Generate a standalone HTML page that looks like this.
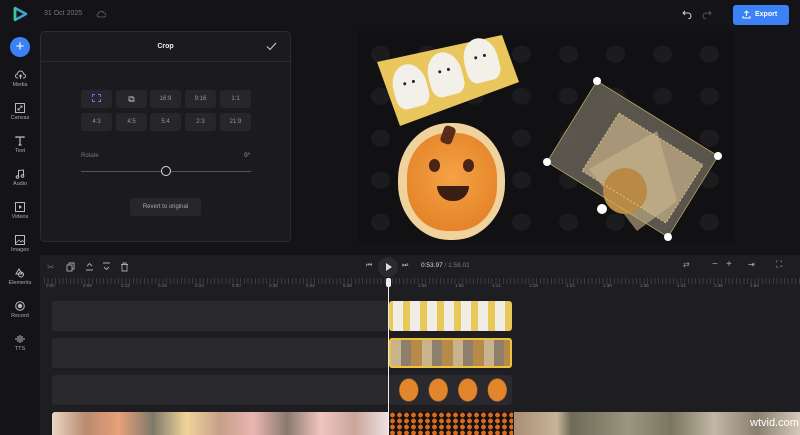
<!DOCTYPE html>
<html><head><style>
*{margin:0;padding:0;box-sizing:border-box}
body{width:800px;height:435px;background:#141418;font-family:"Liberation Sans",sans-serif;color:#ccc;position:relative;overflow:hidden}
.a{position:absolute}
.side{left:0;top:0;width:40px;height:435px;background:#141418}
.si{position:absolute;left:0;width:40px;text-align:center;font-size:5.5px;color:#aaa}
.si svg{display:block;margin:0 auto 2px}
.panel{left:40px;top:31px;width:251px;height:211px;background:#1b1b1f;border:1px solid #2b2b30;border-radius:5px}
.btn{position:absolute;width:31px;height:18px;background:#26262b;border-radius:3px;font-size:6px;color:#999;text-align:center;line-height:18px}
.tl{left:40px;top:255px;width:760px;height:180px;background:#1e1e22}
.track{position:absolute;left:52px;width:336px;height:30px;background:#29292e;border-radius:3px}
.tick{position:absolute;top:283px;font-size:4.5px;color:#777}
.gh{position:absolute;width:34px;height:44px;background:#f3f0ea;border-radius:50% 50% 28% 28%;transform:rotate(-15deg)}
.gh:before,.gh:after{content:"";position:absolute;top:17px;width:3px;height:3px;background:#222;border-radius:50%}
.gh:before{left:11px}.gh:after{left:20px}
</style></head><body>
<div class="a side"></div>
<svg class="a" style="left:12px;top:6px" width="16" height="16" viewBox="0 0 16 16"><path d="M3 2 L14 8 L3 14 Z" fill="none" stroke="#3aa6c9" stroke-width="2.6" stroke-linejoin="round"/><path d="M3 2 L3 14" stroke="#41c29a" stroke-width="2.6"/></svg>
<div class="a" style="left:44px;top:10px;font-size:7px;color:#777">31 Oct 2025</div>
<svg class="a" style="left:96px;top:10px" width="10" height="8" viewBox="0 0 10 8"><path d="M2.5 7 H8 A2 2 0 0 0 8 3 A3 3 0 0 0 2.5 3.5 A1.8 1.8 0 0 0 2.5 7Z" fill="none" stroke="#666" stroke-width=".8"/></svg>
<div class="a" style="left:10px;top:37px;width:20px;height:20px;border-radius:50%;background:#3b82f6;color:#fff;text-align:center;line-height:19px;font-size:15px">+</div>
<div class="si" style="top:70px"><svg width="11" height="10" viewBox="0 0 11 10"><path d="M3 8H2.5A2 2 0 0 1 2.5 4A3 3 0 0 1 8.5 4A2 2 0 0 1 8.5 8H8M5.5 9V5M4 6.5L5.5 5L7 6.5" fill="none" stroke="#bbb"/></svg>Media</div>
<div class="si" style="top:103px"><svg width="10" height="10" viewBox="0 0 10 10"><rect x=".5" y=".5" width="9" height="9" fill="none" stroke="#bbb"/><path d="M3 7L7 3M5 3H7V5M3 5V7H5" fill="none" stroke="#bbb" stroke-width=".8"/></svg>Canvas</div>
<div class="si" style="top:136px"><svg width="10" height="10" viewBox="0 0 10 10"><path d="M1 2V1H9V2M5 1V9M3.5 9H6.5" fill="none" stroke="#bbb" stroke-width="1.2"/></svg>Text</div>
<div class="si" style="top:169px"><svg width="10" height="10" viewBox="0 0 10 10"><path d="M3.5 8V1.5L8.5 1V7" fill="none" stroke="#bbb"/><circle cx="2.5" cy="8" r="1.3" fill="none" stroke="#bbb"/><circle cx="7.5" cy="7" r="1.3" fill="none" stroke="#bbb"/></svg>Audio</div>
<div class="si" style="top:202px"><svg width="10" height="10" viewBox="0 0 10 10"><rect x=".5" y=".5" width="9" height="9" fill="none" stroke="#bbb"/><path d="M4 3V7L7 5Z" fill="#bbb"/></svg>Videos</div>
<div class="si" style="top:235px"><svg width="10" height="10" viewBox="0 0 10 10"><rect x=".5" y=".5" width="9" height="9" fill="none" stroke="#bbb"/><path d="M1 8L4 5L6 7L7.5 5.5L9 7" fill="none" stroke="#bbb" stroke-width=".8"/></svg>Images</div>
<div class="si" style="top:268px"><svg width="10" height="10" viewBox="0 0 10 10"><circle cx="6" cy="6.5" r="2.5" fill="none" stroke="#bbb"/><path d="M4 1L1 6H7Z" fill="none" stroke="#bbb"/></svg>Elements</div>
<div class="si" style="top:301px"><svg width="10" height="10" viewBox="0 0 10 10"><circle cx="5" cy="5" r="4.3" fill="none" stroke="#bbb"/><circle cx="5" cy="5" r="2.2" fill="#bbb"/></svg>Record</div>
<div class="si" style="top:334px"><svg width="10" height="10" viewBox="0 0 10 10"><path d="M1 4V6M3 2V8M5 1V9M7 2V8M9 4V6" stroke="#bbb"/></svg>TTS</div>

<div class="a panel">
 <div style="height:30px;border-bottom:1px solid #2b2b30;text-align:center;line-height:30px;font-size:7px;font-weight:bold;color:#eee">Crop</div>
 <svg style="position:absolute;right:13px;top:10px" width="11" height="9" viewBox="0 0 11 9"><path d="M1 4.5L4 7.5L10 1" fill="none" stroke="#ccc" stroke-width="1.1"/></svg>
 <div class="btn" style="left:40px;top:58px"><span style="display:inline-block;width:9px;height:8px;border:1px dashed #5a7de0;vertical-align:middle"></span></div>
 <div class="btn" style="left:75px;top:58px;color:#ccc;font-size:9px">⧉</div>
 <div class="btn" style="left:109px;top:58px">16:9</div>
 <div class="btn" style="left:144px;top:58px">9:16</div>
 <div class="btn" style="left:179px;top:58px">1:1</div>
 <div class="btn" style="left:40px;top:81px">4:3</div>
 <div class="btn" style="left:75px;top:81px">4:5</div>
 <div class="btn" style="left:109px;top:81px">5:4</div>
 <div class="btn" style="left:144px;top:81px">2:3</div>
 <div class="btn" style="left:179px;top:81px">21:9</div>
 <div style="position:absolute;left:40px;top:121px;font-size:6px;color:#777">Rotate</div>
 <div style="position:absolute;right:40px;top:121px;font-size:6px;color:#aaa">0°</div>
 <div style="position:absolute;left:40px;top:139px;width:170px;height:1px;background:#555"></div>
 <div style="position:absolute;left:120px;top:134px;width:10px;height:10px;border-radius:50%;border:1px solid #ddd;background:#1b1b1f"></div>
 <div style="position:absolute;left:89px;top:166px;width:71px;height:18px;background:#26262b;border-radius:3px;font-size:6px;color:#aaa;text-align:center;line-height:18px">Revert to original</div>
</div>

<svg class="a" style="left:682px;top:9px" width="10" height="10" viewBox="0 0 10 10"><path d="M3 2L1 4L3 6M1 4H6A3 3 0 0 1 6 10" fill="none" stroke="#ccc"/></svg>
<svg class="a" style="left:702px;top:9px" width="10" height="10" viewBox="0 0 10 10"><path d="M7 2L9 4L7 6M9 4H4A3 3 0 0 0 4 10" fill="none" stroke="#555"/></svg>
<div class="a" style="left:733px;top:5px;width:56px;height:20px;background:#3b82f6;border-radius:3px;color:#fff;font-size:7px;font-weight:bold;line-height:20px;padding-left:22px">Export</div>
<svg class="a" style="left:742px;top:10px" width="9" height="9" viewBox="0 0 9 9"><path d="M4.5 6V1M2.5 3L4.5 1L6.5 3M1 6V8H8V6" fill="none" stroke="#fff"/></svg>

<!-- canvas -->
<div class="a" style="left:357px;top:31px;width:377px;height:212px;background:#111113;overflow:hidden">
 <div style="position:absolute;inset:0;background:radial-gradient(ellipse 10px 9px at 50% 55%,#1c1c1e 90%,transparent 100%) 0 0/47px 42px"></div>
 <svg style="position:absolute;left:0;top:0" width="377" height="212"><path d="M20 31L145 4L162 51L43 95Z" fill="#e9c75c"/></svg>
 <div class="gh" style="left:36px;top:33px"></div><div class="gh" style="left:71px;top:21px"></div><div class="gh" style="left:107px;top:7px"></div>
 <div style="position:absolute;left:41px;top:92px;width:107px;height:117px;background:#f0d29c;border-radius:48%"></div>
 <div style="position:absolute;left:50px;top:102px;width:90px;height:98px;background:radial-gradient(circle at 50% 45%,#f5a245,#e07a20);border-radius:45%"></div>
 <div style="position:absolute;left:85px;top:95px;width:12px;height:18px;background:#5a2a1a;border-radius:4px;transform:rotate(20deg)"></div>
 <div style="position:absolute;left:80px;top:155px;width:32px;height:15px;background:#3a1e14;border-radius:0 0 16px 16px"></div>
 <div style="position:absolute;left:72px;top:128px;width:11px;height:13px;background:#4a2418;border-radius:50%"></div>
 <div style="position:absolute;left:106px;top:128px;width:11px;height:13px;background:#4a2418;border-radius:50%"></div>
 <svg style="position:absolute;left:0;top:0" width="377" height="212">
  <path d="M240 50L361 125L311 206L190 131Z" fill="#6c665c" opacity=".8"/>
  <path d="M262 82L346 134L309 192L225 140Z" fill="#a89678"/>
  <path d="M232 138L300 100L320 170L280 200Z" fill="#c8b48e" opacity=".6"/>
  <ellipse cx="268" cy="160" rx="22" ry="23" fill="#b98a45"/>
  <path d="M240 50L361 125L311 206L190 131Z" fill="none" stroke="#c9b660" stroke-width=".7"/>
  <path d="M262 82L346 134L309 192L225 140Z" fill="none" stroke="#e5d080" stroke-width=".8" stroke-dasharray="2 2"/>
  <g fill="#fff"><circle cx="240" cy="50" r="4"/><circle cx="361" cy="125" r="4"/><circle cx="311" cy="206" r="4"/><circle cx="190" cy="131" r="4"/><circle cx="245" cy="178" r="5"/></g></svg>
</div>

<!-- timeline -->
<div class="a tl"></div>
<div class="a" style="left:47px;top:262px;font-size:9px;color:#666">✂</div>
<svg class="a" style="left:66px;top:262px" width="64" height="10" viewBox="0 0 64 10"><g fill="none" stroke="#aaa" stroke-width=".9"><rect x="1" y="3" width="5" height="6"/><path d="M3 3V1H8V7H6"/><path d="M20 8H27M21 4L23.5 1.5L26 4"/><path d="M37 1H44M38 5L40.5 7.5L43 5"/><path d="M55 2.5H62M56 2.5V9H61V2.5M57 2.5V1H60V2.5"/></g></svg>
<div class="a" style="left:366px;top:262px;font-size:7px;color:#aaa">⏮</div>
<div class="a" style="left:378px;top:257px;width:20px;height:20px;border-radius:50%;background:#2a2a2f"></div>
<svg class="a" style="left:385px;top:263px" width="8" height="8"><path d="M1 0L7 4L1 8Z" fill="#ddd"/></svg>
<div class="a" style="left:402px;top:262px;font-size:7px;color:#aaa">⏭</div>
<div class="a" style="left:421px;top:262px;font-size:6.5px;color:#ddd">0:53.97 <span style="color:#777">/ 1:58.01</span></div>
<div class="a" style="left:683px;top:260px;font-size:8px;color:#999">⇄</div>
<div class="a" style="left:712px;top:259px;font-size:10px;color:#aaa">−&nbsp;&nbsp;&nbsp;+</div>
<div class="a" style="left:748px;top:260px;font-size:8px;color:#aaa">⇥</div>
<div class="a" style="left:776px;top:259px;font-size:9px;color:#aaa">⛶</div>
<div class="a" style="left:44px;top:278px;width:756px;height:6px;background:repeating-linear-gradient(90deg,#3a3a40 0 1px,transparent 1px 3.7px)"></div>
<div class="tick" style="left:46px">0:00</div><div class="tick" style="left:83px">0:06</div><div class="tick" style="left:121px">0:12</div><div class="tick" style="left:158px">0:18</div><div class="tick" style="left:195px">0:24</div><div class="tick" style="left:232px">0:30</div><div class="tick" style="left:269px">0:36</div><div class="tick" style="left:306px">0:42</div><div class="tick" style="left:343px">0:48</div><div class="tick" style="left:418px">1:00</div><div class="tick" style="left:455px">1:06</div><div class="tick" style="left:492px">1:12</div><div class="tick" style="left:529px">1:18</div><div class="tick" style="left:566px">1:24</div><div class="tick" style="left:603px">1:30</div><div class="tick" style="left:640px">1:36</div><div class="tick" style="left:677px">1:42</div><div class="tick" style="left:714px">1:48</div><div class="tick" style="left:750px">1:54</div>
<div class="track" style="top:301px"></div>
<div class="track" style="top:338px"></div>
<div class="track" style="top:375px"></div>
<div class="a" style="left:52px;top:412px;width:336px;height:23px;background:linear-gradient(90deg,#e9d7c4,#b98b70,#e7a07a,#7d7a6a,#f1d39a,#c6a08a,#eab5b0,#887a6e,#f2c6c0,#c9a59a,#ede0e0);border-radius:3px 0 0 0"></div>
<div class="a" style="left:389px;top:301px;width:123px;height:30px;background:repeating-linear-gradient(90deg,#e7c859 0 4px,#f0ede4 4px 14px,#e7c859 14px 17px);border-radius:3px"></div>
<div class="a" style="left:389px;top:338px;width:123px;height:30px;border:2px solid #f0c43a;background:repeating-linear-gradient(90deg,#c9b38c 0 10px,#8d7f6a 10px 20px,#b68b4a 20px 31px);border-radius:3px"></div>
<div class="a" style="left:389px;top:375px;width:123px;height:30px;background:#29292e;border-radius:3px"></div>
<div class="a" style="left:394px;top:377px;width:118px;height:26px;background:radial-gradient(ellipse 10px 12px at 50% 50%,#e3852b 90%,transparent 100%) 0 0/29.5px 26px"></div>
<div class="a" style="left:389px;top:412px;width:124px;height:23px;background:radial-gradient(circle 2.5px at 50% 50%,#d56a20 90%,#1a1210 100%) 0 0/7px 6px"></div>
<div class="a" style="left:514px;top:412px;width:286px;height:23px;background:linear-gradient(90deg,#a88e72,#c9b49a 15%,#6d6a55 20%,#9a9680 40%,#7a7660 55%,#c2b7a4 70%,#8a8070 85%,#d6c9bb)"></div>
<div class="a" style="left:750px;top:417px;font-size:11px;color:#fff">wtvid.com</div>
<div class="a" style="left:388px;top:282px;width:1px;height:153px;background:#eee"></div>
<div class="a" style="left:386px;top:278px;width:5px;height:9px;background:#eee;border-radius:2px"></div>
</body></html>
